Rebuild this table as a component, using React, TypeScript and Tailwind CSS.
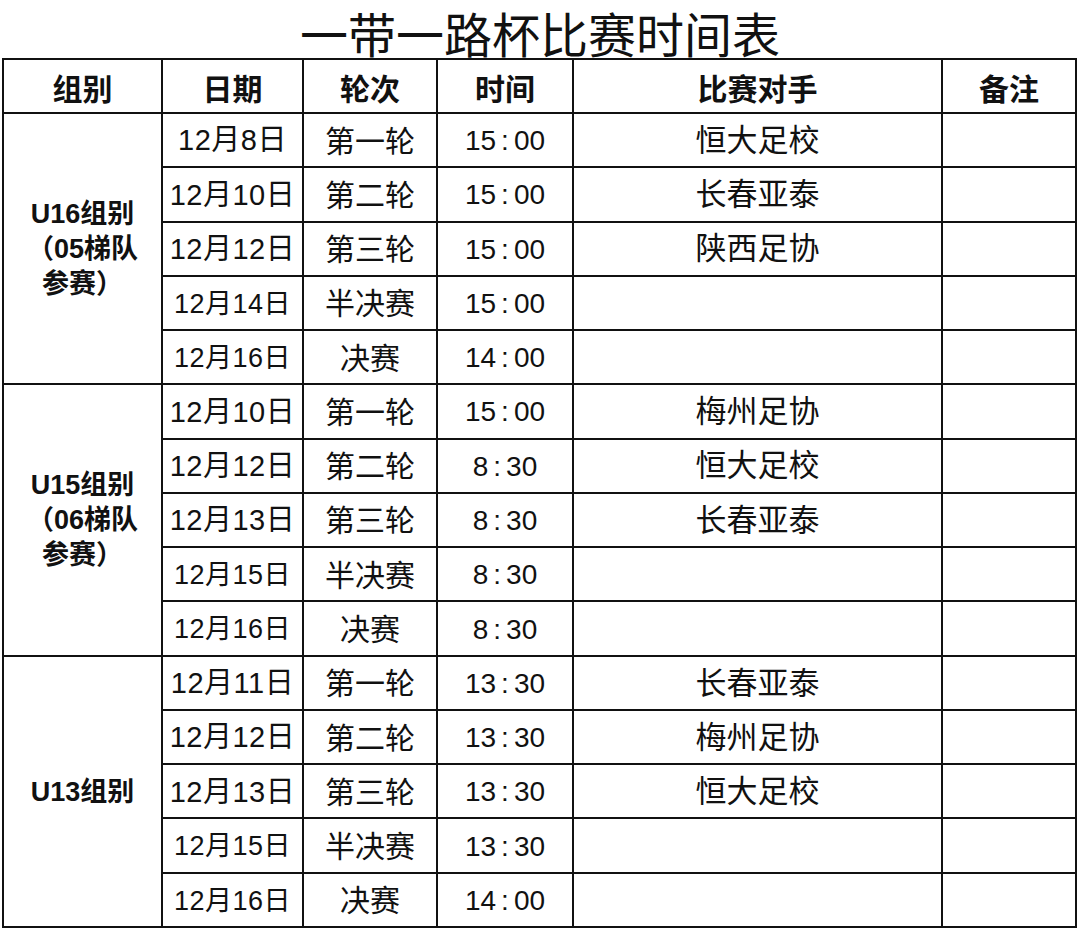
import React from "react";

type Row = { date: string; small?: boolean; round: string; time: string; opp: string };
type Group = { label: string[]; rows: Row[] };

const groups: Group[] = [
  {
    label: ["U16组别", "（05梯队", "参赛）"],
    rows: [
      { date: "12月8日", round: "第一轮", time: "15:00", opp: "恒大足校" },
      { date: "12月10日", round: "第二轮", time: "15:00", opp: "长春亚泰" },
      { date: "12月12日", round: "第三轮", time: "15:00", opp: "陕西足协" },
      { date: "12月14日", small: true, round: "半决赛", time: "15:00", opp: "" },
      { date: "12月16日", small: true, round: "决赛", time: "14:00", opp: "" },
    ],
  },
  {
    label: ["U15组别", "（06梯队", "参赛）"],
    rows: [
      { date: "12月10日", round: "第一轮", time: "15:00", opp: "梅州足协" },
      { date: "12月12日", round: "第二轮", time: "8:30", opp: "恒大足校" },
      { date: "12月13日", round: "第三轮", time: "8:30", opp: "长春亚泰" },
      { date: "12月15日", small: true, round: "半决赛", time: "8:30", opp: "" },
      { date: "12月16日", small: true, round: "决赛", time: "8:30", opp: "" },
    ],
  },
  {
    label: ["U13组别"],
    rows: [
      { date: "12月11日", round: "第一轮", time: "13:30", opp: "长春亚泰" },
      { date: "12月12日", round: "第二轮", time: "13:30", opp: "梅州足协" },
      { date: "12月13日", round: "第三轮", time: "13:30", opp: "恒大足校" },
      { date: "12月15日", small: true, round: "半决赛", time: "13:30", opp: "" },
      { date: "12月16日", small: true, round: "决赛", time: "14:00", opp: "" },
    ],
  },
];

function Time({ t }: { t: string }) {
  const [h, m] = t.split(":");
  return (
    <span>
      {h}
      <span className="mx-[5px]">:</span>
      {m}
    </span>
  );
}

const cell = "bg-white flex items-center justify-center text-[#111] pt-[2px]";

export default function App() {
  return (
    <div className="w-[1080px] h-[932px] bg-white font-['Liberation_Sans','Noto_Sans_CJK_SC',sans-serif]">
      <div className="h-[58px] flex items-end justify-center text-[48px] leading-[58px] text-[#111] font-['Noto_Sans_CJK_SC',sans-serif]">
        <span className="translate-y-[3px]">一带一路杯比赛时间表</span>
      </div>
      <div className="ml-[2px] w-[1075px] border-2 border-[#111] bg-[#111] grid grid-cols-[157px_139px_132px_134px_367px_132px] grid-rows-[52px_repeat(15,52.27px)] gap-[2px]">
        {["组别", "日期", "轮次", "时间", "比赛对手", "备注"].map((h) => (
          <div key={h} className={`${cell} font-bold text-[30px] font-['Noto_Sans_CJK_SC',sans-serif]`}>
            {h}
          </div>
        ))}
        {groups.map((g, gi) => (
          <React.Fragment key={gi}>
            <div className={`${cell} row-span-5 flex-col text-center font-bold text-[27px] leading-[35px]`}>
              {g.label.map((l, li) => (
                <div key={li}>{l}</div>
              ))}
            </div>
            {g.rows.map((r, ri) => (
              <React.Fragment key={ri}>
                <div className={`${cell} ${r.small ? "text-[27px]" : "text-[29px]"} tracking-[0.5px]`}>
                  {r.date}
                </div>
                <div className={`${cell} text-[30px]`}>{r.round}</div>
                <div className={`${cell} text-[28px]`}>
                  <Time t={r.time} />
                </div>
                <div className={`${cell} text-[31px]`}>{r.opp}</div>
                <div className={cell} />
              </React.Fragment>
            ))}
          </React.Fragment>
        ))}
      </div>
    </div>
  );
}
